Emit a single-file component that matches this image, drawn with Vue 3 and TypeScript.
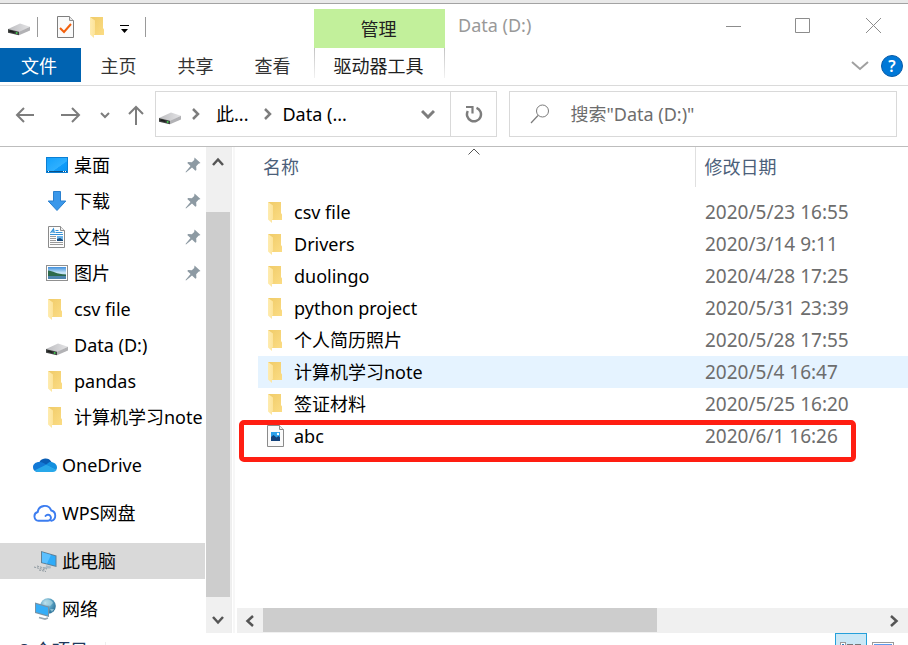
<script setup lang="ts">
import { ref } from 'vue'

interface PlaceItem {
  label: string
  icon: string
  pinned?: boolean
  root?: boolean
  selected?: boolean
}

interface FileItem {
  name: string
  date: string
  icon: string
  hovered?: boolean
  marked?: boolean
}

const query = ref('')
const tabs = ['主页', '共享', '查看']

const places: PlaceItem[] = [
  { label: '桌面', icon: 'desktop', pinned: true },
  { label: '下载', icon: 'download', pinned: true },
  { label: '文档', icon: 'document', pinned: true },
  { label: '图片', icon: 'picture', pinned: true },
  { label: 'csv file', icon: 'folder' },
  { label: 'Data (D:)', icon: 'drive' },
  { label: 'pandas', icon: 'folder' },
  { label: '计算机学习note', icon: 'folder' },
  { label: 'OneDrive', icon: 'onedrive', root: true },
  { label: 'WPS网盘', icon: 'wps', root: true },
  { label: '此电脑', icon: 'pc', root: true, selected: true },
  { label: '网络', icon: 'network', root: true },
]

const files: FileItem[] = [
  { name: 'csv file', date: '2020/5/23 16:55', icon: 'folder' },
  { name: 'Drivers', date: '2020/3/14 9:11', icon: 'folder' },
  { name: 'duolingo', date: '2020/4/28 17:25', icon: 'folder' },
  { name: 'python project', date: '2020/5/31 23:39', icon: 'folder' },
  { name: '个人简历照片', date: '2020/5/28 17:55', icon: 'folder' },
  { name: '计算机学习note', date: '2020/5/4 16:47', icon: 'folder', hovered: true },
  { name: '签证材料', date: '2020/5/25 16:20', icon: 'folder' },
  { name: 'abc', date: '2020/6/1 16:26', icon: 'image', marked: true },
]

const sideThumb = { top: '9.2%', height: '88.2%' }
const listThumb = { width: '63.6%' }
</script>

<template>
  <svg class="defs" width="0" height="0" aria-hidden="true">
    <defs>
      <linearGradient id="g-folder" x1="0" y1="0" x2="1" y2="1">
        <stop offset="0" stop-color="#f0cb68" />
        <stop offset="1" stop-color="#fbdc84" />
      </linearGradient>
      <linearGradient id="g-flap" x1="0" y1="0" x2="1" y2="0">
        <stop offset="0" stop-color="#ffecb0" />
        <stop offset="1" stop-color="#fce39a" />
      </linearGradient>
      <linearGradient id="g-drive" x1="0" y1="0" x2="1" y2="0">
        <stop offset="0" stop-color="#bcbcbf" />
        <stop offset="1" stop-color="#e4e4e6" />
      </linearGradient>
      <linearGradient id="g-desk" x1="0" y1="0" x2="1" y2="1">
        <stop offset="0" stop-color="#12a0fb" />
        <stop offset="0.6" stop-color="#2fb0ff" />
        <stop offset="0.62" stop-color="#0f9cfa" />
        <stop offset="1" stop-color="#0a94f2" />
      </linearGradient>
      <linearGradient id="g-sky" x1="0" y1="0" x2="0" y2="1">
        <stop offset="0" stop-color="#3f8fdd" />
        <stop offset="0.5" stop-color="#cfe9f8" />
        <stop offset="1" stop-color="#4b87b4" />
      </linearGradient>
      <radialGradient id="g-globe" cx="0.35" cy="0.3" r="0.8">
        <stop offset="0" stop-color="#c9e8f2" />
        <stop offset="0.5" stop-color="#5ba3c4" />
        <stop offset="1" stop-color="#23678f" />
      </radialGradient>
    </defs>

    <symbol id="i-folder" viewBox="0 0 24 24">
      <path d="M3 2h13v11l1 1.500V20H7z" fill="url(#g-folder)" />
      <path d="M3 2l5 3.500V19l-1 1v3l-4-3.500z" fill="url(#g-flap)" />
    </symbol>
    <symbol id="i-drive" viewBox="0 0 24 24">
      <path d="M1 16l12-5.500 10 3.200-11 5.300z" fill="url(#g-drive)" />
      <path d="M1 16l11 2.800V22.300L1 19.800z" fill="#3f4241" />
      <path d="M12 18.800l11-5.100v3.800l-11 4.800z" fill="#b2b2b5" />
      <path d="M2.500 18l5 1.300" stroke="#1c1e1d" stroke-width="1.500" />
      <circle cx="9.700" cy="20" r="0.900" fill="#3fd04c" />
    </symbol>
    <symbol id="i-desktop" viewBox="0 0 24 24">
      <rect x="1.500" y="4.500" width="21" height="15" fill="url(#g-desk)" stroke="#0b7fd4" />
      <path d="M2 18.500h20" stroke="#0a4f86" />
      <path d="M3 18.500h1M18 18.500h1M20 18.500h1" stroke="#fff" />
    </symbol>
    <symbol id="i-download" viewBox="0 0 24 24">
      <path d="M8.500 2.500h7v9.500h5.300L12 21.500 3.200 12h5.300z" fill="#3b98ea" stroke="#2a80cf" />
    </symbol>
    <symbol id="i-document" viewBox="0 0 24 24">
      <path d="M3.500 1.500h12l4 4v17h-16z" fill="#fdfdfd" stroke="#8b8b8b" />
      <path d="M15.500 1.500v4h4" fill="#eee" stroke="#8b8b8b" />
      <path d="M5.500 8l3-4 .8 4M7 7h2" fill="none" stroke="#2f8fd6" stroke-width="1.200" />
      <path d="M10.500 5.500h3M10.500 7.500h7M5 9.500h13" stroke="#3492d8" />
      <path d="M5 11.500h6M5 13.500h6M5 15.500h6M5 17.500h13M5 19.500h13" stroke="#9a9a9a" />
      <rect x="12" y="11" width="6" height="5" fill="#6cb3e8" />
      <path d="M12 16v-2l3-1 3 2v1z" fill="#174a7c" />
    </symbol>
    <symbol id="i-picture" viewBox="0 0 24 24">
      <rect x="1.500" y="4.500" width="21" height="15" fill="#fff" stroke="#909090" />
      <rect x="3" y="6" width="18" height="12" fill="url(#g-sky)" />
      <path d="M3 9.500c5 .5 8 3.500 18 4v1.500H3z" fill="#2d6a4c" />
      <path d="M3 15h18v3H3z" fill="#4d84ad" />
    </symbol>
    <symbol id="i-onedrive" viewBox="0 0 24 24">
      <path d="M6 10a7 7 0 0 1 12.500-1L13 13z" fill="#0a5eb5" />
      <path d="M6.500 9c3 0 5 1.500 8.500 4L4 19A5 5 0 0 1 0 14c0-3 3-5.200 6.500-5z" fill="#1279d6" />
      <path d="M12.500 12l4-3c4-.5 7.500 2 7.500 5.500 0 1-.4 2-1 2.700z" fill="#1490df" />
      <path d="M13 11.800l10.500 5.200c-.8 1.200-2 2-3.500 2H5c-1.500 0-2.700-.5-3.600-1.400z" fill="#28a8ea" />
    </symbol>
    <symbol id="i-wps" viewBox="0 0 24 24">
      <path
        d="M12.500 15a3 3 0 1 1 2.500 4.800H5.500a4.500 4.500 0 0 1-.8-8.800A7 7 0 0 1 18.200 9.500a5.300 5.300 0 0 1 0 10.300"
        fill="none"
        stroke="#3c7df0"
        stroke-width="1.900"
        stroke-linecap="round"
      />
    </symbol>
    <symbol id="i-pc" viewBox="0 0 24 24">
      <path d="M8 2l15.500 4.500V18L8 14z" fill="#5f7f96" />
      <path d="M9 3.300l13.500 4v9.400L9 13.200z" fill="#2fabf8" />
      <path d="M9 3.300l9 2.700-4 8.500-5-1.300z" fill="#5cc0ff" />
      <path d="M13 17l5 1.300M10.500 18.800h7" stroke="#aebbc4" stroke-width="1.500" />
      <path d="M1 18l11 3M4 17l10 3M6 21l7 1.500" stroke="#8d989f" stroke-width="1" stroke-dasharray="2 1" />
    </symbol>
    <symbol id="i-network" viewBox="0 0 24 24">
      <circle cx="15" cy="9" r="7.800" fill="url(#g-globe)" />
      <path d="M12 3c3-1.500 7 0 8 3l-3 3-4-2zM17 12l4 0-2 3z" fill="#a9d6e2" opacity="0.700" />
      <path d="M2 5.500l14 4V20L2 16z" fill="#7893a5" />
      <path d="M3 7l12 3.500v8L3 15z" fill="#35aef8" />
      <path d="M6 20.500l6 1.500 3-1" fill="none" stroke="#9aa8b1" stroke-width="1.800" />
    </symbol>
    <symbol id="i-image" viewBox="0 0 24 24">
      <path d="M2.500 1.500h12l4 4v17h-16z" fill="#fafafa" stroke="#8b8b8b" />
      <path d="M14.500 1.500v4h4" fill="#eee" stroke="#8b8b8b" />
      <rect x="6" y="8" width="9" height="9" fill="#2aa0ea" />
      <path d="M6 17v-4l2.500-2 3 2.500 2-1.500 1.500 1.500V17z" fill="#12417b" />
      <circle cx="13" cy="10" r="1.200" fill="#fff" />
    </symbol>
    <symbol id="i-pin" viewBox="0 0 16 16">
      <path d="M9.500.5l6 5.500-2 .8-2.300 2.500.2 3.700-1 .8L7 10.500 1 15.500l-.5-.5 5-6L2.300 6l.8-1 3.700.2L9.200 3z" fill="#8d9aa3" />
    </symbol>
  </svg>

  <div class="window">
    <header class="caption">
      <div class="caption-left">
        <div class="quick">
          <svg class="icon quick-drive" viewBox="0 2 24 24"><use href="#i-drive" width="24" height="24" /></svg>
          <span class="bar"></span>
          <button class="bare props" aria-label="属性">
            <svg width="18" height="22" viewBox="0 0 18 22">
              <path d="M.5 .5h12l4 4v17H.5z" fill="#fafafa" stroke="#7e7e7e" />
              <path d="M12.500.5v4h4" fill="#e8e8e8" stroke="#8e8e8e" />
              <path d="M3 12l4 4 7-8" fill="none" stroke="#f2600c" stroke-width="2" />
            </svg>
          </button>
          <button class="bare" aria-label="新建文件夹">
            <svg class="icon"><use href="#i-folder" /></svg>
          </button>
          <button class="bare more" aria-label="自定义快速访问工具栏">
            <svg width="10" height="9" viewBox="0 0 10 9"><path d="M0 0h9v1H0zM1 4h7L4.500 8z" fill="#000" /></svg>
          </button>
          <span class="bar"></span>
        </div>
        <nav class="tabs">
          <button class="tab file">文件</button>
          <button v-for="t in tabs" :key="t" class="tab">{{ t }}</button>
        </nav>
      </div>
      <div class="context">
        <div class="context-title">管理</div>
        <button class="context-tab">驱动器工具</button>
      </div>
      <div class="caption-right">
        <div class="title-row">
          <h1 class="title">Data (D:)</h1>
          <div class="controls">
            <button class="bare control" aria-label="最小化">
              <svg width="16" height="16"><path d="M1 8.500h15" stroke="#8c8c8c" /></svg>
            </button>
            <button class="bare control" aria-label="最大化">
              <svg width="16" height="16"><path d="M.5 .5h14v14H.5z" fill="none" stroke="#8c8c8c" /></svg>
            </button>
            <button class="bare control" aria-label="关闭">
              <svg width="16" height="16"><path d="M1 0l15 15M16 0L1 15" stroke="#8c8c8c" /></svg>
            </button>
          </div>
        </div>
        <div class="help-row">
          <button class="bare" aria-label="展开功能区">
            <svg width="18" height="10" viewBox="0 0 18 10"><path d="M1 1l8 7 8-7" fill="none" stroke="#a0a0a0" stroke-width="2" /></svg>
          </button>
          <button class="help" aria-label="帮助">?</button>
        </div>
      </div>
    </header>

    <div class="navbar">
      <div class="history">
        <button class="bare" aria-label="后退">
          <svg width="20" height="18" viewBox="0 0 20 18"><path d="M19 9H2M9 2L2 9l7 7" fill="none" stroke="#7d7d7d" stroke-width="2" /></svg>
        </button>
        <button class="bare forward" aria-label="前进">
          <svg width="20" height="18" viewBox="0 0 20 18"><path d="M0 9h18M11 2l7 7-7 7" fill="none" stroke="#7d7d7d" stroke-width="2" /></svg>
        </button>
        <button class="bare" aria-label="最近浏览的位置">
          <svg width="10" height="8" viewBox="0 0 10 8"><path d="M1 2l4 4 4-4" fill="none" stroke="#7d7d7d" stroke-width="2" /></svg>
        </button>
        <button class="bare up" aria-label="向上">
          <svg width="16" height="20" viewBox="0 0 16 20"><path d="M8 20V2M1 9l7-7 7 7" fill="none" stroke="#7d7d7d" stroke-width="2" /></svg>
        </button>
      </div>
      <div class="address">
        <div class="crumbs">
          <svg class="icon"><use href="#i-drive" /></svg>
          <svg class="sep" width="8" height="12" viewBox="0 0 8 12"><path d="M1 1l5 5-5 5" fill="none" stroke="#7d7d7d" stroke-width="2.500" /></svg>
          <button class="bare crumb">此...</button>
          <svg class="sep" width="8" height="12" viewBox="0 0 8 12"><path d="M1 1l5 5-5 5" fill="none" stroke="#7d7d7d" stroke-width="2.500" /></svg>
          <button class="bare crumb">Data (...</button>
          <button class="bare drop" aria-label="以前的位置">
            <svg width="14" height="10" viewBox="0 0 14 10"><path d="M1 2l6 6 6-6" fill="none" stroke="#7d7d7d" stroke-width="3" /></svg>
          </button>
        </div>
        <button class="bare refresh" aria-label="刷新">
          <svg width="18" height="18" viewBox="0 0 18 18">
            <path d="M11.500 2.800A7 7 0 1 1 2.800 6" fill="none" stroke="#7d7d7d" stroke-width="2.500" />
            <path d="M1 2h6.500v6.500" fill="none" stroke="#7d7d7d" stroke-width="2.200" />
          </svg>
        </button>
      </div>
      <label class="search">
        <svg width="20" height="20" viewBox="0 0 20 20">
          <circle cx="12.500" cy="7" r="6" fill="none" stroke="#7b7b7b" />
          <path d="M8 11.500L1 19" stroke="#7b7b7b" stroke-width="1.200" />
        </svg>
        <input v-model="query" type="text" placeholder="搜索&quot;Data (D:)&quot;" aria-label="搜索" />
      </label>
    </div>

    <main class="body">
      <aside class="side">
        <ul class="places">
          <li
            v-for="p in places"
            :key="p.label"
            class="place"
            :class="{ root: p.root, selected: p.selected }"
          >
            <svg class="icon"><use :href="'#i-' + p.icon" /></svg>
            <span class="place-name">{{ p.label }}</span>
            <svg v-if="p.pinned" class="pin"><use href="#i-pin" /></svg>
          </li>
        </ul>
        <div class="vscroll">
          <button class="bare arrow" aria-label="向上滚动">
            <svg width="12" height="9" viewBox="0 0 12 9"><path d="M1 8l5-5.500L11 8" fill="none" stroke="#555" stroke-width="2.500" /></svg>
          </button>
          <div class="vtrack"><div class="vthumb" :style="sideThumb"></div></div>
          <button class="bare arrow" aria-label="向下滚动">
            <svg width="12" height="9" viewBox="0 0 12 9"><path d="M1 1l5 5.500L11 1" fill="none" stroke="#555" stroke-width="2.500" /></svg>
          </button>
        </div>
      </aside>

      <section class="details">
        <table class="files">
          <colgroup>
            <col class="col-name" />
            <col />
          </colgroup>
          <thead>
            <tr>
              <th class="name-head">
                名称
                <svg class="caret" width="12" height="7" viewBox="0 0 12 7"><path d="M.5 6.500L6 1l5.500 5.500" fill="none" stroke="#555" /></svg>
              </th>
              <th class="date-head">修改日期</th>
            </tr>
          </thead>
          <tbody>
            <tr v-for="f in files" :key="f.name" :class="{ hovered: f.hovered }">
              <td class="name">
                <div class="name-box">
                  <svg class="icon"><use :href="'#i-' + f.icon" /></svg>
                  <span>{{ f.name }}</span>
                </div>
                <span v-if="f.marked" class="mark"></span>
              </td>
              <td class="date">{{ f.date }}</td>
            </tr>
          </tbody>
        </table>
        <div class="hscroll">
          <button class="bare harrow" aria-label="向左滚动">
            <svg width="9" height="12" viewBox="0 0 9 12"><path d="M8 1L2.500 6 8 11" fill="none" stroke="#555" stroke-width="2.500" /></svg>
          </button>
          <div class="htrack"><div class="hthumb" :style="listThumb"></div></div>
          <button class="bare harrow" aria-label="向右滚动">
            <svg width="9" height="12" viewBox="0 0 9 12"><path d="M1 1l5.500 5L1 11" fill="none" stroke="#555" stroke-width="2.500" /></svg>
          </button>
        </div>
      </section>
    </main>

    <footer class="status">
      <span class="count">8 个项目</span>
      <span class="status-bar"></span>
      <button class="view active" aria-label="详细信息">
        <svg width="22" height="18" viewBox="0 0 22 18">
          <rect x=".5" y=".5" width="5" height="5" fill="#fff" stroke="#999" />
          <rect x="2" y="2" width="2" height="2" fill="#2a7fc0" />
          <path d="M7 2.500h6M15 2.500h6" stroke="#777" />
        </svg>
      </button>
      <button class="view" aria-label="大图标">
        <svg width="22" height="18" viewBox="0 0 22 18"><rect x=".5" y=".5" width="21" height="17" fill="#fff" stroke="#999" /><rect x="2" y="2" width="18" height="14" fill="#5b9bf0" /></svg>
      </button>
    </footer>
  </div>
</template>

<style>
body {
  margin: 0;
  background: #fff;
}
</style>

<style scoped>
.window {
  display: flex;
  flex-direction: column;
  height: 100vh;
  box-sizing: border-box;
  overflow: hidden;
  background: #fff;
  border-top: 3px solid #e9e9e9;
  color: #000;
  font-family: 'Noto Sans', 'Noto Sans CJK SC', sans-serif;
  font-size: 18px;
  line-height: 24px;
}
.defs {
  position: absolute;
}
.bare {
  display: flex;
  align-items: center;
  justify-content: center;
  padding: 0;
  border: 0;
  background: none;
  color: inherit;
  font: inherit;
}
.icon {
  flex: none;
  width: 24px;
  height: 24px;
}
.caption {
  display: flex;
  flex: none;
  height: 83px;
  box-sizing: border-box;
  border-top: 1px solid #a3a3a3;
  border-bottom: 1px solid #dadada;
}
.caption-left {
  display: flex;
  flex-direction: column;
  width: 314px;
}
.quick {
  display: flex;
  align-items: center;
  height: 46px;
  margin-bottom: -2px;
  padding-left: 7px;
}
.bar {
  width: 1px;
  height: 20px;
  margin-left: 6px;
  background: #9a9a9a;
}
.props {
  margin: 0 12px 0 19px;
}
.more {
  margin: 4px 9px 0 9px;
}
.tabs {
  display: flex;
  height: 34px;
}
.tab {
  width: 77px;
  padding: 2px 2px 0 0;
  border: 0;
  background: none;
  color: #333;
  font: inherit;
}
.tab.file {
  width: 81px;
  padding-right: 3px;
  background: #0063b1;
  color: #fff;
}
.context {
  display: flex;
  flex-direction: column;
  width: 131px;
  height: 73px;
  margin-top: 5px;
}
.context-title {
  height: 39px;
  padding-right: 2px;
  background: #c2f09b;
  color: #222;
  line-height: 40px;
  text-align: center;
}
.context-tab {
  height: 30px;
  padding: 6px 2px 0 0;
  border: 1px solid;
  border-width: 0 1px;
  border-image: linear-gradient(#c0c0c0, #f4f4f4) 1;
  background: none;
  color: #222;
  font: inherit;
}
.caption-right {
  display: flex;
  flex: 1;
  flex-direction: column;
}
.title-row {
  display: flex;
  justify-content: space-between;
  height: 44px;
  padding-left: 13px;
}
.title {
  margin: 0;
  color: #999;
  font-size: 18px;
  font-weight: 400;
  line-height: 42px;
}
.controls {
  display: flex;
}
.control {
  width: 70px;
}
.help-row {
  display: flex;
  align-items: center;
  justify-content: flex-end;
  gap: 12px;
  height: 36px;
  padding-right: 5px;
}
.help {
  width: 22px;
  height: 22px;
  padding: 0;
  border: 1px solid #0a5ca8;
  border-radius: 50%;
  background: #0078d7;
  color: #fff;
  font: inherit;
  font-size: 16px;
  font-weight: 600;
  line-height: 20px;
}
.navbar {
  display: grid;
  flex: none;
  grid-template-columns: 155px minmax(0, 6fr) minmax(0, 7fr);
  align-items: center;
  height: 61px;
  padding: 0 11px 4px 0;
  box-sizing: border-box;
  border-bottom: 1px solid #bdbdbd;
}
.history {
  display: flex;
  align-items: center;
  padding-top: 2px;
  padding-left: 15px;
}
.forward {
  margin: 0 19px 0 26px;
}
.up {
  margin-left: 18px;
}
.address,
.search {
  display: flex;
  height: 46px;
  box-sizing: border-box;
  border: 1px solid #d9d9d9;
}
.crumbs {
  display: flex;
  flex: 1;
  align-items: center;
  padding-left: 2px;
}
.sep {
  margin: 0 16px 0 10px;
}
.crumb + .sep {
  margin: 0 10px 0 16px;
}
.drop {
  margin: 0 15px 0 auto;
}
.refresh {
  width: 46px;
  border-left: 1px solid #d9d9d9;
}
.search {
  align-items: center;
  gap: 20px;
  margin-left: 12px;
  padding-left: 20px;
}
.search input {
  flex: 1;
  min-width: 0;
  padding: 0;
  border: 0;
  outline: 0;
  background: none;
  color: #222;
  font: inherit;
}
.search input::placeholder {
  color: #6d6d6d;
  opacity: 1;
}
.body {
  display: flex;
  flex: 1;
  min-height: 0;
}
.side {
  display: flex;
  flex: none;
  width: 231px;
  border-right: 1px solid #eee;
}
.places {
  flex: 1;
  min-width: 0;
  margin: 0 1px 0 0;
  padding: 0;
  overflow: hidden;
  list-style: none;
}
.place {
  display: flex;
  align-items: center;
  gap: 5px;
  height: 36px;
  padding: 0 4px 0 45px;
  white-space: nowrap;
}
.place.root {
  margin-top: 12px;
  padding: 0 0 0 33px;
}
.selected {
  background: #d9d9d9;
}
.place-name {
  flex: 1;
}
.pin {
  width: 16px;
  height: 16px;
}
.vscroll {
  display: flex;
  flex-direction: column;
  flex: none;
  width: 25px;
  background: #f0f0f0;
}
.arrow {
  height: 25px;
  padding: 4px 1px 0 0;
}
.arrow:last-child {
  padding-top: 0;
}
.vtrack {
  position: relative;
  flex: 1;
}
.vthumb {
  position: absolute;
  left: 0;
  width: 24px;
  background: #cdcdcd;
}
.details {
  display: flex;
  flex: 1;
  flex-direction: column;
  justify-content: space-between;
  min-width: 0;
  margin-left: 1px;
  border-left: 2px solid #f7f7f7;
}
.files {
  margin-left: 23px;
  border-collapse: collapse;
  table-layout: fixed;
}
.col-name {
  width: 437px;
}
.files th {
  position: relative;
  height: 40px;
  padding: 0;
  color: #4c607a;
  font-weight: 400;
  text-align: left;
}
.files .name-head {
  padding-left: 5px;
}
.files .date-head {
  padding-left: 9px;
  border-left: 1px solid #e0e0e0;
}
.caret {
  position: absolute;
  top: 1px;
  left: calc(50% - 8px);
}
.files tbody::before {
  content: '';
  display: block;
  height: 9px;
}
.files tbody tr {
  position: relative;
}
.files td {
  height: 32px;
  padding: 0;
  white-space: nowrap;
}
.files .hovered {
  background: #e5f3ff;
}
.name-box {
  display: flex;
  align-items: center;
  gap: 5px;
  padding-left: 7px;
}
.files .date {
  padding-left: 10px;
  color: #6d6d6d;
  font-size: 19px;
}
.mark {
  position: absolute;
  top: 0;
  right: 52px;
  bottom: -10px;
  left: -19px;
  border: 5px solid #ff1e12;
  border-radius: 5px;
}
.hscroll {
  display: flex;
  flex: none;
  height: 25px;
  margin-left: 2px;
  background: #f0f0f0;
}
.harrow {
  width: 26px;
  padding-right: 2px;
}
.htrack {
  flex: 1;
}
.hthumb {
  height: 24px;
  background: #cdcdcd;
}
.status {
  display: flex;
  flex: none;
  align-items: flex-start;
  height: 12px;
  padding: 0 9px 0 19px;
  overflow: hidden;
}
.count {
  margin-top: 5px;
  color: #1e395b;
}
.status-bar {
  width: 1px;
  height: 20px;
  margin: 9px auto 0 17px;
  background: #eee;
}
.view {
  width: 32px;
  height: 32px;
  padding: 6px 0 0;
  border: 1px solid transparent;
  background: none;
}
.view.active {
  border-color: #26a0da;
  background: #cbe8f6;
}
</style>
